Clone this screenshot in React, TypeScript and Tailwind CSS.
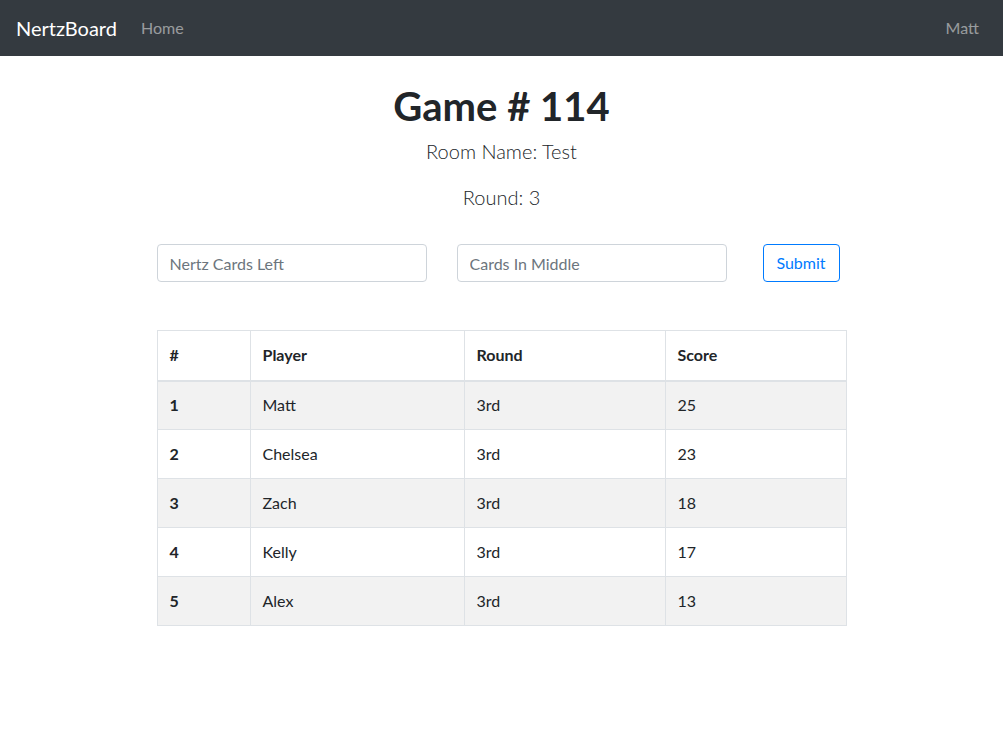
import React from "react";

const players = [
  { rank: 1, name: "Matt", round: "3rd", score: 25 },
  { rank: 2, name: "Chelsea", round: "3rd", score: 23 },
  { rank: 3, name: "Zach", round: "3rd", score: 18 },
  { rank: 4, name: "Kelly", round: "3rd", score: 17 },
  { rank: 5, name: "Alex", round: "3rd", score: 13 },
];

const font = "font-['Lato',_'Open_Sans',_sans-serif]";

export default function App() {
  return (
    <div className={`min-h-[751px] bg-white text-[#212529] ${font}`}>
      {/* Navbar */}
      <nav className="flex h-14 items-center bg-[#343a40] px-4">
        <span className="mr-4 text-xl leading-[30px] text-white">NertzBoard</span>
        <a className="px-2 text-base text-white/50">Home</a>
        <span className="ml-auto px-2 text-base text-white/50">Matt</span>
      </nav>

      <div className="mx-auto mt-[26px] w-[690px]">
        <h1 className="mb-[6px] text-center text-[40px] font-bold leading-[48px]">Game # 114</h1>
        <p className="mb-4 text-center text-xl font-light leading-[30px]">Room Name: Test</p>
        <p className="text-center text-xl font-light leading-[30px]">Round: 3</p>

        {/* Score entry */}
        <div className="mt-8 flex items-center">
          <input
            className="h-[38px] w-[270px] rounded border border-[#ced4da] px-3 text-base text-[#495057] outline-none placeholder:text-[#6c757d]"
            placeholder="Nertz Cards Left"
          />
          <input
            className="ml-[30px] h-[38px] w-[270px] rounded border border-[#ced4da] px-3 text-base text-[#495057] outline-none placeholder:text-[#6c757d]"
            placeholder="Cards In Middle"
          />
          <button className="ml-9 h-[38px] w-[77px] rounded border border-[#007bff] text-base text-[#007bff]">
            Submit
          </button>
        </div>

        {/* Scoreboard */}
        <table className="mt-12 w-full border-collapse text-base">
          <thead>
            <tr className="h-[50px]">
              <th className="w-[93px] border border-b-2 border-[#dee2e6] px-3 text-left font-bold">#</th>
              <th className="w-[214px] border border-b-2 border-[#dee2e6] px-3 text-left font-bold">Player</th>
              <th className="w-[201px] border border-b-2 border-[#dee2e6] px-3 text-left font-bold">Round</th>
              <th className="border border-b-2 border-[#dee2e6] px-3 text-left font-bold">Score</th>
            </tr>
          </thead>
          <tbody>
            {players.map((p, i) => (
              <tr key={p.rank} className={`h-[49px] ${i % 2 === 0 ? "bg-[#f2f2f2]" : ""}`}>
                <th className="border border-[#dee2e6] px-3 text-left font-bold">{p.rank}</th>
                <td className="border border-[#dee2e6] px-3">{p.name}</td>
                <td className="border border-[#dee2e6] px-3">{p.round}</td>
                <td className="border border-[#dee2e6] px-3">{p.score}</td>
              </tr>
            ))}
          </tbody>
        </table>
      </div>
    </div>
  );
}
